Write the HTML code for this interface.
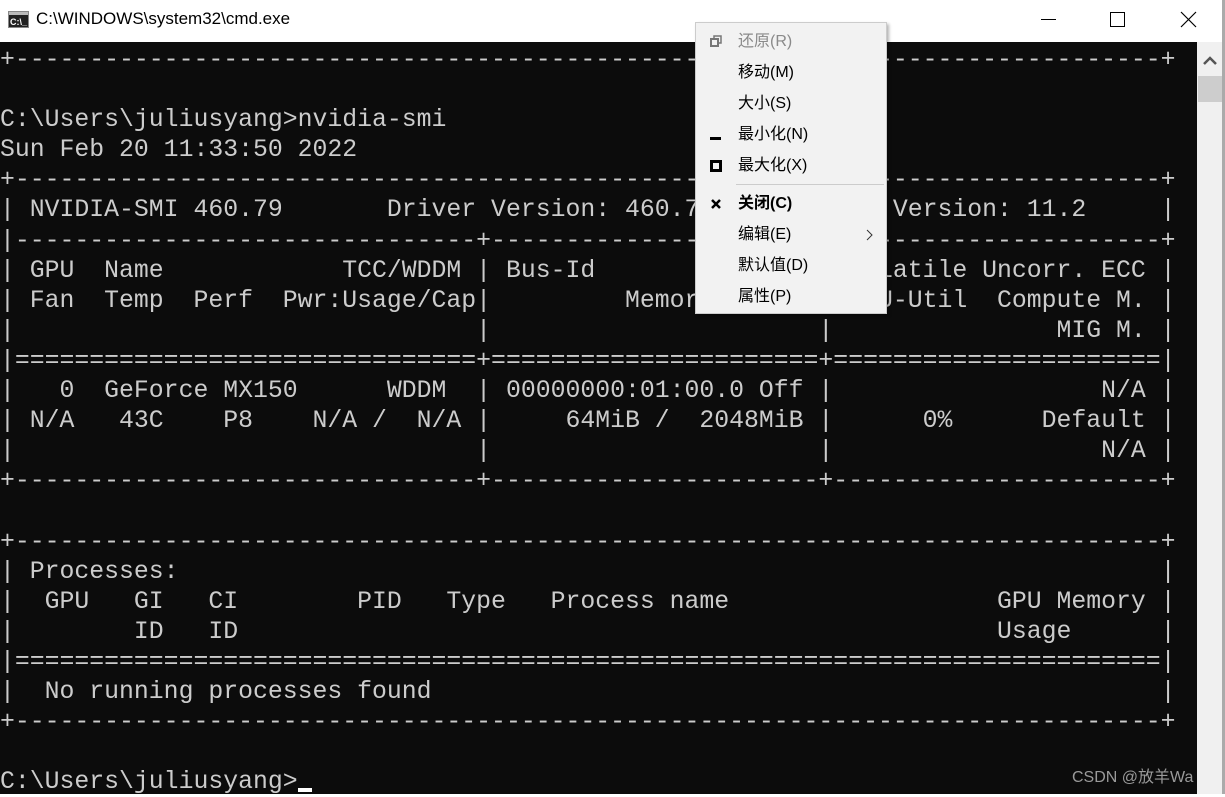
<!DOCTYPE html>
<html><head><meta charset="utf-8"><style>
*{margin:0;padding:0;box-sizing:border-box}
body{width:1225px;height:794px;overflow:hidden;background:#fff;position:relative;font-family:"Liberation Sans","Noto Sans CJK SC",sans-serif}
#title{position:absolute;left:0;top:0;width:1225px;height:42px;background:#fff}
#title .t{position:absolute;left:36px;top:9px;font-size:17px;color:#000}
#con{position:absolute;left:0;top:42px;width:1197px;height:752px;background:#0c0c0c}
pre{position:absolute;left:0;top:3px;font-family:"Liberation Mono",monospace;font-size:24.8px;line-height:30.1px;color:#cccccc;white-space:pre}
#sb{position:absolute;left:1197px;top:42px;width:25px;height:752px;background:#f0f0f0}
#rb{position:absolute;left:1222px;top:0;width:3px;height:794px;background:#aaa}
#menu{position:absolute;left:695px;top:22px;width:192px;height:292px;background:#f2f2f2;border:1px solid #ccc;box-shadow:2px 2px 3px rgba(0,0,0,.3);font-size:16px;color:#000}
.it{position:absolute;left:42px;height:31px;line-height:31px}
.ic{position:absolute;left:14px}
#wm{position:absolute;left:1072px;top:763px;font-size:16px;color:#9a9a9a}
</style></head><body>
<div id="title">
<svg style="position:absolute;left:8px;top:11px" width="21" height="17"><rect x="0.5" y="0.5" width="20" height="16" fill="#222" stroke="#888"/><rect x="1" y="1" width="19" height="3" fill="#bbb"/><text x="2" y="14" font-size="9" fill="#fff" font-family="Liberation Sans" font-weight="bold">C:\_</text></svg>
<div class="t">C:\WINDOWS\system32\cmd.exe</div>
<svg style="position:absolute;left:1040px;top:10px" width="175" height="22"><line x1="1" y1="9.5" x2="16" y2="9.5" stroke="#000"/><rect x="70.5" y="2.5" width="14" height="14" fill="none" stroke="#000"/><path d="M141 2L156 17M156 2L141 17" stroke="#000" stroke-width="1.2"/></svg>
</div>
<div id="con"><pre>+-----------------------------------------------------------------------------+

C:\Users\juliusyang>nvidia-smi
Sun Feb 20 11:33:50 2022
+-----------------------------------------------------------------------------+
| NVIDIA-SMI 460.79       Driver Version: 460.79       CUDA Version: 11.2     |
|-------------------------------+----------------------+----------------------+
| GPU  Name            TCC/WDDM | Bus-Id        Disp.A | Volatile Uncorr. ECC |
| Fan  Temp  Perf  Pwr:Usage/Cap|         Memory-Usage | GPU-Util  Compute M. |
|                               |                      |               MIG M. |
|===============================+======================+======================|
|   0  GeForce MX150      WDDM  | 00000000:01:00.0 Off |                  N/A |
| N/A   43C    P8    N/A /  N/A |     64MiB /  2048MiB |      0%      Default |
|                               |                      |                  N/A |
+-------------------------------+----------------------+----------------------+

+-----------------------------------------------------------------------------+
| Processes:                                                                  |
|  GPU   GI   CI        PID   Type   Process name                  GPU Memory |
|        ID   ID                                                   Usage      |
|=============================================================================|
|  No running processes found                                                 |
+-----------------------------------------------------------------------------+

C:\Users\juliusyang><span style="display:inline-block;width:14px;height:4px;background:#fff;vertical-align:-4px"></span></pre></div>
<div id="sb"><svg style="position:absolute;left:6px;top:14px" width="14" height="10"><path d="M1 8L7 2L13 8" stroke="#555" stroke-width="2.5" fill="none"/></svg><div style="position:absolute;left:1px;top:34px;width:24px;height:26px;background:#cdcdcd"></div></div>
<div id="rb"></div>
<div id="menu">
<svg class="ic" style="top:12px" width="12" height="12"><rect x="1" y="4" width="7" height="7" fill="none" stroke="#777" stroke-width="2"/><path d="M4 4V1H11V8H8" fill="none" stroke="#777" stroke-width="1.5"/></svg>
<div class="it" style="top:3px;color:#8a8a8a">还原(R)</div>
<div class="it" style="top:34px">移动(M)</div>
<div class="it" style="top:65px">大小(S)</div>
<div style="position:absolute;left:14px;top:114px;width:11px;height:3px;background:#000"></div>
<div class="it" style="top:96px">最小化(N)</div>
<svg class="ic" style="top:137px" width="12" height="12"><rect x="1.5" y="1.5" width="9" height="9" fill="none" stroke="#000" stroke-width="3"/></svg>
<div class="it" style="top:127px">最大化(X)</div>
<div style="position:absolute;left:40px;top:161px;width:148px;height:1px;background:#ccc"></div>
<svg class="ic" style="top:175px" width="12" height="12"><path d="M2 2L10 10M10 2L2 10" stroke="#000" stroke-width="2.5"/></svg>
<div class="it" style="top:165px;font-weight:bold">关闭(C)</div>
<div class="it" style="top:196px">编辑(E)</div>
<svg style="position:absolute;left:170px;top:206px" width="8" height="12"><path d="M1 1L6 6L1 11" stroke="#333" fill="none"/></svg>
<div class="it" style="top:227px">默认值(D)</div>
<div class="it" style="top:258px">属性(P)</div>
</div>
<div id="wm">CSDN @放羊Wa</div>
</body></html>
